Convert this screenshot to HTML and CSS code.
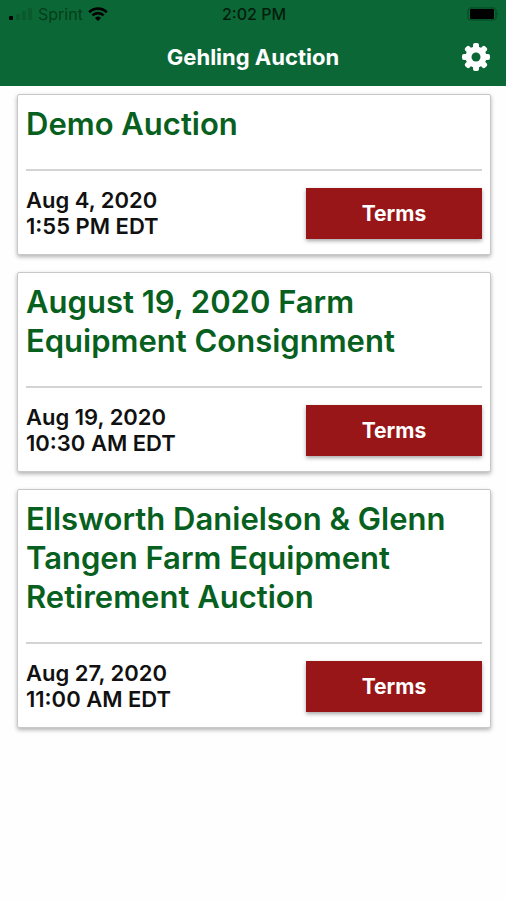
FILE: index.html
```
<!doctype html>

<html lang="en">
	<head>
		<meta charset="utf-8">
		<meta name="viewport" content="width=device-width, initial-scale=1">
		<title>Gehling Auction</title>
		<link rel="stylesheet" href="styles.css">
	</head>

	<body>
		<header class="app-header">
			<!-- Phone status bar -->
			<div class="status-bar">
				<div class="carrier">
					<svg class="signal" width="24" height="14" viewBox="0 0 24 14" aria-hidden="true">
						<rect x="0" y="9" width="4" height="4" rx="1" />
						<rect class="weak" x="7" y="7" width="4" height="6" rx="1" />
						<rect class="weak" x="13" y="4" width="4" height="9" rx="1" />
						<rect class="weak" x="19" y="1" width="4" height="12" rx="1" />
					</svg>
					<span>Sprint</span>
					<svg class="wifi" width="20" height="14" viewBox="0 0 20 14" aria-hidden="true">
						<path d="M1.2 5.2a12.6 12.6 0 0 1 17.6 0" />
						<path d="M4.4 8.4a8 8 0 0 1 11.2 0" />
						<path class="dot" d="M10 14l-3-3a4.3 4.3 0 0 1 6 0z" />
					</svg>
				</div>
				<div class="clock">2:02 PM</div>
				<svg class="battery" width="32" height="14" viewBox="0 0 32 14" aria-hidden="true">
					<rect class="case" x="1" y="1" width="28" height="12" rx="3" />
					<rect x="3" y="2" width="24" height="10" rx="1" />
					<path class="cap" d="M30 5q2 2 0 4z" />
				</svg>
			</div>

			<!-- Title and settings -->
			<div class="nav-bar">
				<h1>Gehling Auction</h1>
				<button class="settings" type="button" aria-label="Settings">
					<svg width="30" height="30" viewBox="0 0 30 30" aria-hidden="true">
						<g fill="#fff">
							<rect x="12" y="1" width="6" height="28" rx="2" />
							<rect x="12" y="1" width="6" height="28" rx="2" transform="rotate(45 15 15)" />
							<rect x="12" y="1" width="6" height="28" rx="2" transform="rotate(90 15 15)" />
							<rect x="12" y="1" width="6" height="28" rx="2" transform="rotate(135 15 15)" />
							<circle cx="15" cy="15" r="10.5" />
						</g>
						<circle cx="15" cy="15" r="4.5" fill="#0b6836" />
					</svg>
				</button>
			</div>
		</header>

		<!-- List of upcoming auctions -->
		<main class="auctions">
			<article class="card">
				<h2>Demo Auction</h2>
				<div class="details">
					<p>Aug 4, 2020<br>1:55 PM EDT</p>
					<button class="terms" type="button">Terms</button>
				</div>
			</article>

			<article class="card">
				<h2>August 19, 2020 Farm Equipment Consignment</h2>
				<div class="details">
					<p>Aug 19, 2020<br>10:30 AM EDT</p>
					<button class="terms" type="button">Terms</button>
				</div>
			</article>

			<article class="card">
				<h2>Ellsworth Danielson &amp; Glenn Tangen Farm Equipment Retirement Auction</h2>
				<div class="details">
					<p>Aug 27, 2020<br>11:00 AM EDT</p>
					<button class="terms" type="button">Terms</button>
				</div>
			</article>
		</main>
	</body>
</html>
```
FILE: styles.css
```
/* Page setup */

* { box-sizing: border-box; }

body {
	margin: 0;
	background-color: #fefefe;
	color: #111;
	font-family: Inter, "Liberation Sans", sans-serif;
}

h1, h2, p { margin: 0; }

button {
	border: 0;
	font-family: inherit;
	cursor: pointer;
}

/* Header */

.app-header {
	background-color: #0b6836;
}

.status-bar {
	display: grid;
	grid-template-columns: 1fr auto 1fr;
	align-items: center;
	height: 28px;
	padding: 0 7px 0 9px;
	font-size: 16px;
}

.carrier {
	display: flex;
	align-items: center;
	gap: 5px;
	color: #043d1c;
}

.clock {
	color: #021c0c;
	font-weight: 500;
}

.weak { fill: #0a5a2e; }

.wifi path {
	fill: none;
	stroke: #000;
	stroke-width: 2.6;
}

.wifi .dot {
	fill: #000;
	stroke: none;
}

.battery { justify-self: end; }

.battery .case {
	fill: none;
	stroke: #075028;
	stroke-width: 1.5;
}

.battery .cap { fill: #075028; }

.nav-bar {
	display: grid;
	grid-template-columns: 1fr auto 1fr;
	align-items: center;
	height: 58px;
	padding: 0 15px;
}

.nav-bar h1 {
	grid-column: 2;
	color: #fff;
	font-size: 22px;
	font-weight: 700;
}

.settings {
	justify-self: end;
	width: 30px;
	height: 30px;
	padding: 0;
	background: none;
}

.settings svg { display: block; }

/* Auction cards */

.auctions {
	display: flex;
	flex-direction: column;
	gap: 17px;
	padding: 8px 15px 8px 17px;
}

.card {
	padding: 9px 8px 15px;
	background-color: #fff;
	border: 1px solid #c8c8c8;
	border-radius: 2px;
	box-shadow: 0 2px 4px rgba(0, 0, 0, 0.3);
}

.card h2 {
	padding-bottom: 26px;
	border-bottom: 2px solid #d4d4d4;
	color: #075f20;
	font-size: 31px;
	font-weight: 600;
	line-height: 39px;
}

.details {
	display: flex;
	align-items: center;
	justify-content: space-between;
	padding-top: 16px;
}

.details p {
	font-size: 22px;
	font-weight: 600;
	line-height: 26px;
}

.terms {
	width: 176px;
	height: 51px;
	background-color: #981618;
	color: #fff;
	font-size: 21px;
	font-weight: 700;
	box-shadow: 0 2px 4px rgba(0, 0, 0, 0.35);
}
```
